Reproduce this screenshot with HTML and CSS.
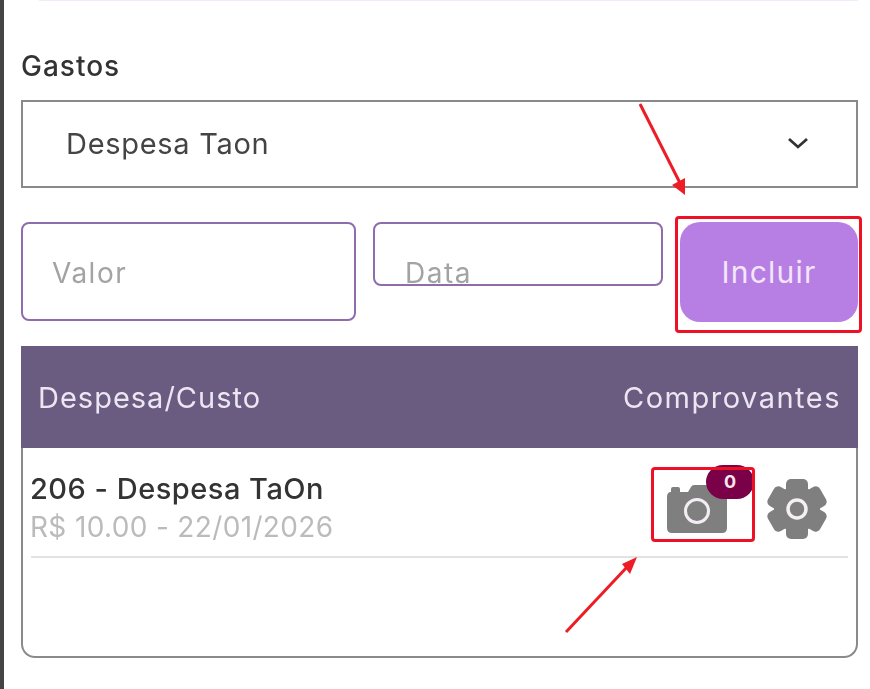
FILE: index.html
```html
<!DOCTYPE html>
<html>
  <head>
    <title>Gastos</title>
    <meta charset="UTF-8">
    <meta name="viewport" content="width=device-width, initial-scale=1.0">
    <link rel="stylesheet" href="styles.css">
  </head>

  <body>
    <main class="page">
      <div class="top-edge"></div>

      <label class="field-label">Gastos</label>

      <!--Select-->
      <div class="select">
        <span>Despesa Taon</span>
        <svg class="chevron" width="22" height="14" viewBox="0 0 22 14">
          <path d="M2 3l9 8 9-8" fill="none" stroke="#333" stroke-width="2.8"/>
        </svg>
      </div>

      <!--Form-->
      <div class="form-row">
        <div class="input input-value"><span class="placeholder">Valor</span></div>
        <div class="input input-date"><span class="placeholder">Data</span></div>
        <button class="add">Incluir<span class="mark mark-add"></span></button>
      </div>

      <!--List-->
      <section class="list">
        <header class="list-head">
          <span>Despesa/Custo</span>
          <span class="head-right">Comprovantes</span>
        </header>
        <div class="list-row">
          <div class="item-text">
            <div class="item-title">206 - Despesa TaOn</div>
            <div class="item-sub">R$ 10.00 - 22/01/2026</div>
          </div>
          <div class="item-actions">
            <div class="camera">
              <svg width="60" height="48" viewBox="0 0 60 48">
                <path d="M4 7V4q0-2 2-2h5q2 0 2 2v3h8l3-5q1-2 3-2h14q2 0 3 2l3 5h7q6 0 6 6v30q0 5-5 5H5q-5 0-5-5V12q0-5 4-5z" fill="#7f7f7f"/>
                <circle cx="30" cy="26" r="11.5" fill="#7f7f7f" stroke="#f4eef4" stroke-width="3"/>
              </svg>
              <span class="badge">0</span>
              <span class="mark mark-camera"></span>
            </div>
            <svg class="gear" width="62" height="62" viewBox="0 0 62 62">
              <g fill="#7f7f7f">
                <circle cx="31" cy="31" r="23"/>
                <rect x="20" y="1" width="22" height="60" rx="5"/>
                <rect x="20" y="1" width="22" height="60" rx="5" transform="rotate(60 31 31)"/>
                <rect x="20" y="1" width="22" height="60" rx="5" transform="rotate(120 31 31)"/>
              </g>
              <circle cx="31" cy="31" r="9" fill="#7f7f7f" stroke="#f4f0f4" stroke-width="3.5"/>
            </svg>
          </div>
        </div>
        <div class="list-line"></div>
      </section>
    </main>

    <!--Red arrows over the page-->
    <svg class="arrows" width="870" height="689" viewBox="0 0 870 689">
      <g fill="#ee1c25">
        <path d="M640 104L681 185" fill="none" stroke="#ee1c25" stroke-width="3"/>
        <path d="M685 195L672 185 685 178z"/>
        <path d="M566 632L628 566" fill="none" stroke="#ee1c25" stroke-width="3"/>
        <path d="M637 557L630 574 622 564z"/>
      </g>
    </svg>
  </body>
</html>
```

FILE: styles.css
```css
html, body {
  margin: 0;
  padding: 0;
  height: 100%;
  overflow: hidden;
  background-color: #fff;
  font-family: Inter, "Liberation Sans", sans-serif;
}

body {
  border-left: 4px solid #444;
  box-sizing: border-box;
  width: 870px;
  height: 689px;
}

.page {
  width: 837px;
  padding-left: 17px;
  filter: blur(0.6px);
}

.top-edge {
  height: 1px;
  margin: 0 0 0 18px;
  background-color: #f5eaf9;
}

.field-label {
  display: block;
  margin-top: 48px;
  font-size: 28px;
  line-height: 34px;
  letter-spacing: 1px;
  font-weight: 500;
  color: #333;
}

.select {
  display: flex;
  justify-content: space-between;
  align-items: center;
  box-sizing: border-box;
  height: 88px;
  margin-top: 17px;
  padding: 0 47px 2px 43px;
  border: 2px solid #8a8a8a;
  font-size: 29px;
  letter-spacing: 0.7px;
  color: #444;
}

.form-row {
  display: flex;
  align-items: flex-start;
  margin-top: 34px;
}

.input {
  box-sizing: border-box;
  border: 2px solid #8f6cae;
  border-radius: 8px;
  background-color: #fff;
  font-size: 28px;
  letter-spacing: 1.5px;
  color: #a3a3a3;
}

.input-value {
  width: 335px;
  height: 99px;
  margin-right: 17px;
  padding: 30px 0 0 29px;
}

.input-date {
  width: 290px;
  height: 64px;
  margin-right: 17px;
  padding: 30px 0 0 30px;
}

.placeholder {
  display: block;
  line-height: 38px;
}

button.add {
  position: relative;
  width: 178px;
  height: 100px;
  padding: 0;
  border: none;
  border-radius: 20px;
  background-color: #b77fe3;
  color: #f3e6fa;
  font-family: inherit;
  font-size: 30px;
  letter-spacing: 1.2px;
}

.mark {
  position: absolute;
  box-sizing: border-box;
  border: 3px solid #ee1024;
  border-radius: 4px;
}

.mark-add {
  left: -5px;
  top: -6px;
  width: 187px;
  height: 117px;
}

.list {
  box-sizing: border-box;
  height: 312px;
  margin-top: 24px;
  border: 2px solid #8a8a8a;
  border-top: none;
  border-radius: 0 0 14px 14px;
}

.list-head {
  display: flex;
  justify-content: space-between;
  align-items: center;
  height: 102px;
  margin: 0 -2px;
  padding: 0 17px;
  background-color: #6a5b80;
  color: #ece6f2;
  font-size: 29px;
  letter-spacing: 1px;
}

.head-right {
  letter-spacing: 1.5px;
}

.list-row {
  display: flex;
  justify-content: space-between;
  padding: 21px 28px 0 7px;
  height: 87px;
}

.item-title {
  font-size: 29px;
  line-height: 40px;
  letter-spacing: 0.5px;
  font-weight: 500;
  color: #333;
}

.item-sub {
  font-size: 28px;
  line-height: 36px;
  letter-spacing: 0.35px;
  color: #bbb;
}

.item-actions {
  display: flex;
  align-items: flex-start;
  gap: 39px;
  padding-top: 8px;
}

.camera {
  position: relative;
  width: 60px;
  height: 48px;
  margin-top: 8px;
}

.camera svg {
  display: block;
}

.badge {
  position: absolute;
  left: 39px;
  top: -20px;
  width: 48px;
  height: 34px;
  border-radius: 17px;
  background-color: #7a0048;
  color: #f6e6ef;
  font-size: 18px;
  font-weight: 700;
  line-height: 34px;
  letter-spacing: 0;
  text-align: center;
}

.mark-camera {
  left: -16px;
  top: -18px;
  width: 104px;
  height: 75px;
}

.gear {
  margin-top: 1px;
}

.list-line {
  height: 2px;
  margin: 0 8px;
  background-color: #e2e2e2;
}

.arrows {
  position: absolute;
  left: 0;
  top: 0;
  filter: blur(0.4px);
}
```
